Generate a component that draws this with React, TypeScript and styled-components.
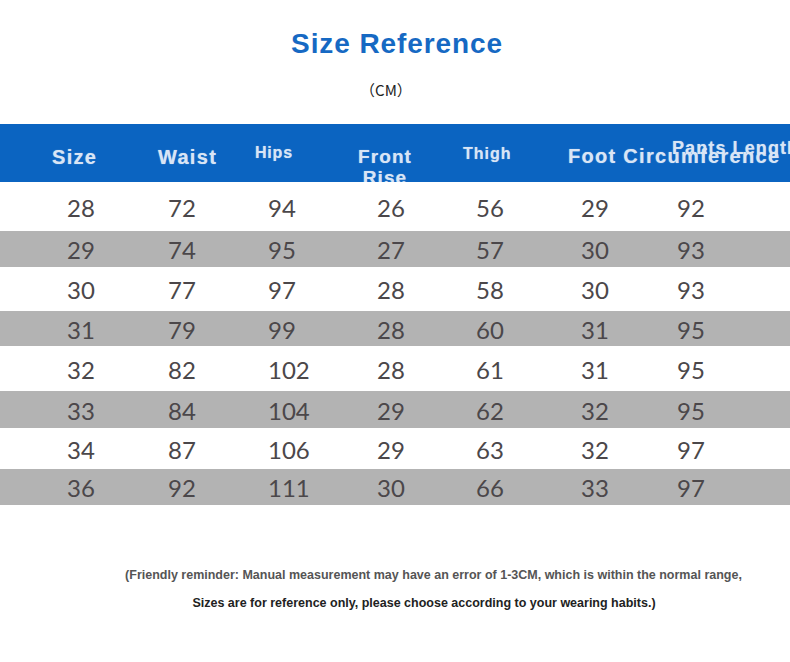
import React from "react";
import styled, { createGlobalStyle } from "styled-components";

const GlobalStyle = createGlobalStyle`
  html, body {
    margin: 0;
    padding: 0;
    background: #ffffff;
  }
  body {
    width: 790px;
    height: 662px;
    overflow: hidden;
    font-family: "Liberation Sans", Arial, sans-serif;
  }
`;

const Page = styled.div`
  width: 790px;
  height: 662px;
  display: flex;
  flex-direction: column;
  background: #ffffff;
`;

const Title = styled.h1`
  margin: 28px 0 0;
  padding-left: 4px;
  font-family: "Liberation Sans", Arial, sans-serif;
  font-weight: 700;
  font-size: 28px;
  line-height: 32px;
  letter-spacing: 0.9px;
  color: #1669c3;
  text-align: center;
`;

const Unit = styled.div`
  margin-top: 20px;
  height: 20px;
  line-height: 20px;
  font-family: "Noto Sans CJK SC", "Liberation Sans", sans-serif;
  font-size: 15px;
  color: #222222;
  text-align: center;
  padding-right: 18px;
`;

const HeaderBar = styled.div`
  margin-top: 24px;
  height: 58px;
  overflow: hidden;
  background: #0b64c1;
  display: grid;
  grid-template-columns: 106px 97px 103px 105px 105px 104px 1fr;
  padding-left: 52px;
  align-items: start;
`;

const HeaderCell = styled.div<{ $size: number; $top: number; $lh: number; $ls: number; $wrap?: boolean }>`
  padding-top: ${(p) => p.$top}px;
  font-family: "Liberation Sans", Arial, sans-serif;
  font-weight: 700;
  font-size: ${(p) => p.$size}px;
  line-height: ${(p) => p.$lh}px;
  letter-spacing: ${(p) => p.$ls}px;
  color: #d9e5f5;
  text-shadow: 0 0 1px rgba(230, 240, 255, 0.6);
  white-space: ${(p) => (p.$wrap ? "normal" : "nowrap")};
  width: ${(p) => (p.$wrap ? "min-content" : "auto")};
  text-align: ${(p) => (p.$wrap ? "center" : "left")};
`;

const Row = styled.div<{ $shade: boolean; $h: number }>`
  height: ${(p) => p.$h}px;
  background: ${(p) => (p.$shade ? "#b3b3b3" : "#ffffff")};
  display: grid;
  grid-template-columns: 101px 100px 109px 99px 105px 96px 1fr;
  padding-left: 67px;
  align-items: center;
`;

const Cell = styled.div`
  font-family: Lato, "Noto Sans", sans-serif;
  font-size: 24px;
  line-height: 28px;
  color: #4b474a;
  padding-top: 2px;
`;

const Notes = styled.div`
  margin-top: 62px;
  display: flex;
  flex-direction: column;
  gap: 12px;
`;

const Note = styled.p<{ $shift: number; $color: string }>`
  margin: 0;
  height: 16px;
  line-height: 16px;
  font-family: "Liberation Sans", Arial, sans-serif;
  font-weight: 700;
  font-size: 12.5px;
  color: ${(p) => p.$color};
  text-align: center;
  padding-left: ${(p) => p.$shift}px;
`;

const headers = [
  { label: "Size", size: 20, top: 21, lh: 24, ls: 1.3 },
  { label: "Waist", size: 20, top: 21, lh: 24, ls: 1.3 },
  { label: "Hips", size: 16, top: 19, lh: 20, ls: 0.8 },
  { label: "Front Rise", size: 19, top: 22, lh: 21, ls: 1.1, wrap: true },
  { label: "Thigh", size: 16, top: 20, lh: 20, ls: 1 },
  { label: "Foot Circumference", size: 20, top: 20, lh: 24, ls: 1.3 },
  { label: "Pants Length", size: 18, top: 14, lh: 20, ls: 1.1 },
];

const rows: { h: number; v: number[] }[] = [
  { h: 49, v: [28, 72, 94, 26, 56, 29, 92] },
  { h: 36, v: [29, 74, 95, 27, 57, 30, 93] },
  { h: 44, v: [30, 77, 97, 28, 58, 30, 93] },
  { h: 35, v: [31, 79, 99, 28, 60, 31, 95] },
  { h: 45, v: [32, 82, 102, 28, 61, 31, 95] },
  { h: 37, v: [33, 84, 104, 29, 62, 32, 95] },
  { h: 41, v: [34, 87, 106, 29, 63, 32, 97] },
  { h: 36, v: [36, 92, 111, 30, 66, 33, 97] },
];

export default function App() {
  return (
    <>
      <GlobalStyle />
      <Page>
        <Title>Size Reference</Title>
        <Unit>（CM）</Unit>
        <HeaderBar>
          {headers.map((h) => (
            <HeaderCell
              key={h.label}
              $size={h.size}
              $top={h.top}
              $lh={h.lh}
              $ls={h.ls}
              $wrap={h.wrap}
            >
              {h.label}
            </HeaderCell>
          ))}
        </HeaderBar>
        {rows.map((r, i) => (
          <Row key={i} $shade={i % 2 === 1} $h={r.h}>
            {r.v.map((n, j) => (
              <Cell key={j}>{n}</Cell>
            ))}
          </Row>
        ))}
        <Notes>
          <Note $shift={77} $color="#555555">
            (Friendly reminder: Manual measurement may have an error of 1-3CM, which is within the normal range,
          </Note>
          <Note $shift={58} $color="#222222">
            Sizes are for reference only, please choose according to your wearing habits.)
          </Note>
        </Notes>
      </Page>
    </>
  );
}
